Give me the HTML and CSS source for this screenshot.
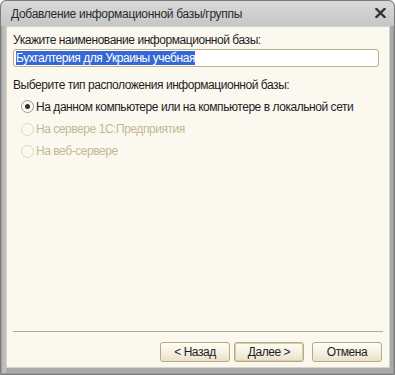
FILE: index.html
```html
<!DOCTYPE html>
<html lang="ru">
<head>
    <meta charset="UTF-8">
    <link rel="stylesheet" href="styles.css">
    <title>Добавление информационной базы/группы</title>
</head>
<body>
    <div class="window">
        <div class="titlebar">
            <span class="title">Добавление информационной базы/группы</span>
            <svg class="close" width="11" height="10" viewBox="0 0 11 10">
                <path d="M1.5 1 L9.5 9 M9.5 1 L1.5 9" stroke="#333" stroke-width="2.4" stroke-linecap="square"/>
            </svg>
        </div>
        <div class="content">
            <div class="label">Укажите наименование информационной базы:</div>
            <div class="input"><span class="selected">Бухгалтерия для Украины учебная</span></div>
            <div class="label second">Выберите тип расположения информационной базы:</div>
            <div class="radio checked"><span class="circle"></span>На данном компьютере или на компьютере в локальной сети</div>
            <div class="radio disabled"><span class="circle"></span>На сервере 1С:Предприятия</div>
            <div class="radio disabled"><span class="circle"></span>На веб-сервере</div>
            <div class="spacer"></div>
            <div class="separator"></div>
            <div class="buttons">
                <div class="btn">&lt; Назад</div>
                <div class="btn default">Далее &gt;</div>
                <div class="btn cancel">Отмена</div>
            </div>
        </div>
    </div>
</body>
</html>
```

FILE: styles.css
```css
*{
    margin: 0;
    padding: 0;
    box-sizing: border-box;
}
body{
    background: #fff;
    font-family: "Liberation Sans", Arial, sans-serif;
    font-size: 12px;
    letter-spacing: -0.45px;
    color: #1e1e1e;
}
.window{
    width: 395px;
    height: 375px;
    display: flex;
    flex-direction: column;
    background: linear-gradient(to right, #8d8d8d 0, #b4b4b4 1px, #c4c4c4 4px, #a9a9a9 6px);
    border: 1px solid #7b7b7b;
    border-radius: 6px 6px 0 0;
    padding: 0 4px 6px 5px;
    box-shadow: inset -1px -1px 0 #9a9a9a;
}
.titlebar{
    height: 25px;
    display: flex;
    align-items: center;
    justify-content: space-between;
    background: linear-gradient(#d9d9d9, #c6c6c6);
    margin: 0 -4px 0 -5px;
    padding-left: 10px;
    padding-right: 8px;
    border-radius: 6px 6px 0 0;
}
.title{
    color: #2a2a2a;
    letter-spacing: -0.3px;
}
.close{
    margin-top: -2px;
}
.content{
    flex: 1;
    background: #fbf8f0;
    padding: 6px 7px 0 6px;
    display: flex;
    flex-direction: column;
    border: 1px solid #d6d2c6;
}
.label{
    line-height: 15px;
    margin-bottom: 1px;
}
.label.second{
    margin-top: 11px;
    margin-bottom: 2px;
}
.input{
    height: 18px;
    width: 366px;
    border: 1px solid #bcae86;
    border-radius: 3px;
    background: #fff;
    padding: 0 0 0 2px;
    line-height: 16px;
}
.selected{
    background: #3568d4;
    color: #fff;
}
.radio{
    display: flex;
    align-items: center;
    height: 22px;
    padding-left: 8px;
}
.radio.checked{
    height: 23px;
}
.circle{
    flex-shrink: 0;
    width: 13px;
    height: 13px;
    border-radius: 50%;
    border: 1px solid #a09a88;
    background: linear-gradient(#f4f2ea, #fff);
    margin-right: 2px;
    position: relative;
}
.radio.checked .circle::after{
    content: "";
    position: absolute;
    left: 3px;
    top: 3px;
    width: 5px;
    height: 5px;
    border-radius: 50%;
    background: #2e2e2e;
}
.radio.disabled{
    color: #c4b894;
}
.radio.disabled .circle{
    border-color: #ddd7c2;
    background: #fbf8f0;
}
.spacer{
    flex: 1;
}
.separator{
    height: 1px;
    background: #b7ab85;
    margin-right: -1px;
}
.buttons{
    display: flex;
    justify-content: flex-end;
    gap: 4px;
    padding: 10px 0 5px;
}
.btn{
    width: 70px;
    height: 20px;
    border: 1px solid #b6a87f;
    border-radius: 3px;
    background: linear-gradient(#fefcf6, #f3eedf 60%, #e9e1c8);
    text-align: center;
    line-height: 18px;
}
.btn.default{
    box-shadow: inset 0 0 0 1px #d8cea9;
}
.btn.cancel{
    margin-left: 4px;
}
```
